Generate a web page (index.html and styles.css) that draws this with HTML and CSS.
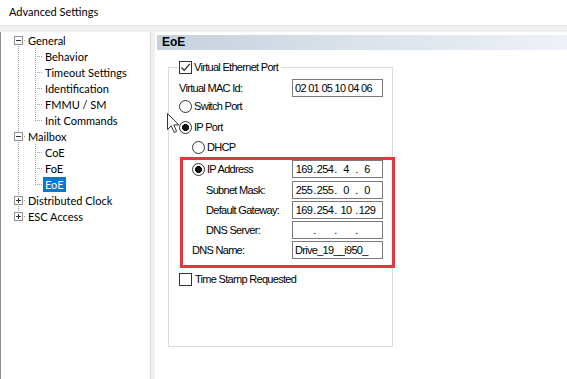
FILE: index.html
```html
<!DOCTYPE html>
<html>
<head>
<meta charset="utf-8">
<link rel="stylesheet" href="styles.css">
</head>
<body>
<div class="titlebar">Advanced Settings</div>
<div class="main">
  <div class="tree">
    <div class="row"><span class="ind exp first"><span class="box minus"></span></span><span class="lbl">General</span></div>
    <div class="row"><span class="ind pass"></span><span class="br"></span><span class="lbl">Behavior</span></div>
    <div class="row"><span class="ind pass"></span><span class="br"></span><span class="lbl">Timeout Settings</span></div>
    <div class="row"><span class="ind pass"></span><span class="br"></span><span class="lbl">Identification</span></div>
    <div class="row"><span class="ind pass"></span><span class="br"></span><span class="lbl">FMMU / SM</span></div>
    <div class="row"><span class="ind pass"></span><span class="br last"></span><span class="lbl">Init Commands</span></div>
    <div class="row"><span class="ind exp"><span class="box minus"></span></span><span class="lbl">Mailbox</span></div>
    <div class="row"><span class="ind pass"></span><span class="br"></span><span class="lbl">CoE</span></div>
    <div class="row"><span class="ind pass"></span><span class="br"></span><span class="lbl">FoE</span></div>
    <div class="row"><span class="ind pass"></span><span class="br last"></span><span class="lbl sel">EoE</span></div>
    <div class="row"><span class="ind exp"><span class="box plus"></span></span><span class="lbl">Distributed Clock</span></div>
    <div class="row"><span class="ind exp last"><span class="box plus"></span></span><span class="lbl">ESC Access</span></div>
  </div>
  <div class="panel">
    <div class="hdr">EoE</div>
    <div class="group">
      <div class="legend"><span class="chk checked"><svg width="11" height="11" viewBox="0 0 11 11"><path d="M1.5 5.5 L4.2 8.3 L9.8 1.8" fill="none" stroke="#222" stroke-width="1.2"/></svg></span><span class="txt">Virtual Ethernet Port</span></div>
      <div class="frow mac"><span class="flabel w1">Virtual MAC Id:</span><span class="input">02 01 05 10 04 06</span></div>
      <div class="opt r1"><span class="radio"></span><span class="txt">Switch Port</span></div>
      <div class="opt r2"><span class="radio on"></span><span class="txt">IP Port</span></div>
      <div class="opt r3 sub"><span class="radio"></span><span class="txt">DHCP</span></div>
      <div class="redbox">
        <div class="frow ip1"><span class="flabel w2 radlabel"><span class="radio on"></span><span class="txt">IP Address</span></span><span class="input ip"><span class="f">169</span><span class="d">.</span><span class="f">254</span><span class="d">.</span><span class="f">4</span><span class="d">.</span><span class="f">6</span></span></div>
        <div class="frow"><span class="flabel w2 ind2">Subnet Mask:</span><span class="input ip"><span class="f">255</span><span class="d">.</span><span class="f">255</span><span class="d">.</span><span class="f">0</span><span class="d">.</span><span class="f">0</span></span></div>
        <div class="frow"><span class="flabel w2 ind2">Default Gateway:</span><span class="input ip"><span class="f">169</span><span class="d">.</span><span class="f">254</span><span class="d">.</span><span class="f">10</span><span class="d">.</span><span class="f">129</span></span></div>
        <div class="frow"><span class="flabel w2 ind2">DNS Server:</span><span class="input ip"><span class="f"></span><span class="d">.</span><span class="f"></span><span class="d">.</span><span class="f"></span><span class="d">.</span><span class="f"></span></span></div>
        <div class="frow"><span class="flabel w2">DNS Name:</span><span class="input">Drive_19__i950_</span></div>
      </div>
      <div class="opt ts"><span class="chk"></span><span class="txt">Time Stamp Requested</span></div>
    </div>
    <svg class="cursor" width="14" height="21" viewBox="0 0 14 21"><path d="M0.5 0.5 L0.5 16.5 L4.3 12.9 L7.2 19.5 L9.6 18.4 L6.8 11.9 L11.8 11.9 Z" fill="#fff" stroke="#333" stroke-width="1" stroke-linejoin="round"/></svg>
  </div>
</div>
</body>
</html>
```
FILE: styles.css
```css
html, body {
  margin: 0;
  padding: 0;
}
body {
  width: 567px;
  height: 379px;
  overflow: hidden;
  background: #fff;
  font-family: Lato, "Noto Sans", sans-serif;
  color: #000;
}
.titlebar {
  height: 25px;
  box-sizing: border-box;
  padding: 0 0 2px 9px;
  display: flex;
  align-items: center;
  font-size: 11px;
  background: #fff;
}
.main {
  display: flex;
  background: #f0f0f0;
  border-top: 1px solid #e3e3e3;
  padding-top: 6px;
  height: 354px;
  box-sizing: border-box;
}
.tree {
  background: #fff;
  border-left: 1px solid #8e8e8e;
  border-right: 1px solid #d9d9d9;
  margin-right: 4px;
  padding-left: 9px;
  box-sizing: border-box;
  width: 151px;
  font-size: 11px;
}
.row {
  display: flex;
  height: 16px;
  align-items: center;
}
.ind {
  width: 16px;
  height: 16px;
  flex: none;
  display: flex;
  align-items: center;
  justify-content: flex-start;
}
.ind.pass {
  background: repeating-linear-gradient(to bottom, #a0a0a0 0 1px, transparent 1px 2px) 8px 0 / 1px 100% no-repeat;
}
.ind.exp {
  background:
    repeating-linear-gradient(to bottom, #a0a0a0 0 1px, transparent 1px 2px) 8px 0 / 1px 100% no-repeat,
    repeating-linear-gradient(to right, #a0a0a0 0 1px, transparent 1px 2px) 8px 8px / 8px 1px no-repeat;
}
.ind.exp.first {
  background:
    repeating-linear-gradient(to bottom, #a0a0a0 0 1px, transparent 1px 2px) 8px 100% / 1px 50% no-repeat,
    repeating-linear-gradient(to right, #a0a0a0 0 1px, transparent 1px 2px) 8px 8px / 8px 1px no-repeat;
}
.ind.exp.last {
  background:
    repeating-linear-gradient(to bottom, #a0a0a0 0 1px, transparent 1px 2px) 8px 0 / 1px 50% no-repeat,
    repeating-linear-gradient(to right, #a0a0a0 0 1px, transparent 1px 2px) 8px 8px / 8px 1px no-repeat;
}
.box {
  width: 9px;
  height: 9px;
  box-sizing: border-box;
  border: 1px solid #919191;
  margin-left: 4px;
  background: #fff;
}
.box.minus {
  background: linear-gradient(#333, #333) center / 5px 1px no-repeat, #fff;
}
.box.plus {
  background: linear-gradient(#333, #333) center / 5px 1px no-repeat, linear-gradient(#333, #333) center / 1px 5px no-repeat, #fff;
}
.br {
  width: 17px;
  height: 16px;
  flex: none;
  background:
    repeating-linear-gradient(to bottom, #a0a0a0 0 1px, transparent 1px 2px) 9px 0 / 1px 100% no-repeat,
    repeating-linear-gradient(to right, #a0a0a0 0 1px, transparent 1px 2px) 9px 8px / 8px 1px no-repeat;
}
.br.last {
  background:
    repeating-linear-gradient(to bottom, #a0a0a0 0 1px, transparent 1px 2px) 9px 0 / 1px 9px no-repeat,
    repeating-linear-gradient(to right, #a0a0a0 0 1px, transparent 1px 2px) 9px 8px / 8px 1px no-repeat;
}
.lbl {
  padding: 0 2px;
  height: 15px;
  line-height: 15px;
  white-space: nowrap;
}
.lbl.sel {
  background: #0078d7;
  color: #fff;
}
.panel {
  flex: 1;
  background: #fff;
  padding: 3px 0 0 2px;
  position: relative;
}
.hdr {
  height: 15px;
  line-height: 15px;
  padding-left: 5px;
  font-family: "Liberation Sans", Arial, sans-serif;
  font-weight: bold;
  font-size: 12px;
  background: linear-gradient(to right, #c5d1de, #dde4ec 55%, #eef1f7);
}
.group {
  margin: 17px 0 0 11px;
  width: 225px;
  height: 280px;
  box-sizing: border-box;
  border: 1px solid #dcdcdc;
  padding-left: 10px;
  font-family: "Liberation Sans", Arial, sans-serif;
  font-size: 11px;
  letter-spacing: -0.7px;
  display: flex;
  flex-direction: column;
  align-items: flex-start;
}
.legend {
  margin-top: -8px;
  height: 14px;
  display: flex;
  align-items: center;
  background: #fff;
  padding-right: 3px;
}
.chk {
  width: 13px;
  height: 13px;
  box-sizing: border-box;
  border: 1px solid #333;
  background: #fff;
  flex: none;
  display: flex;
  align-items: center;
  justify-content: center;
}
.txt {
  margin-left: 2px;
  white-space: nowrap;
}
.opt {
  display: flex;
  align-items: center;
  height: 16px;
}
.radio {
  width: 13px;
  height: 13px;
  box-sizing: border-box;
  border: 1px solid #333;
  border-radius: 50%;
  background: #fff;
  flex: none;
}
.radio.on {
  background: radial-gradient(circle, #111 0 3.2px, #fff 3.8px);
}
.frow {
  display: flex;
  align-items: center;
  height: 20px;
}
.mac {
  margin-top: 4px;
}
.r1 { margin-top: 0; }
.r2 { margin-top: 5px; }
.r3 { margin-top: 4px; }
.sub { margin-left: 13px; }
.flabel {
  flex: none;
  white-space: nowrap;
}
.w1 { width: 113px; }
.w2 { width: 100px; }
.ind2 { padding-left: 14px; box-sizing: border-box; }
.radlabel { display: flex; align-items: center; }
.input {
  width: 91px;
  height: 18px;
  box-sizing: border-box;
  border: 1px solid #7a7a7a;
  background: #fff;
  padding-left: 2px;
  display: flex;
  align-items: center;
  white-space: nowrap;
  flex: none;
}
.ip .f {
  width: 18px;
  text-align: center;
  flex: none;
}
.ip .d {
  width: 3px;
  text-align: center;
  flex: none;
}
.redbox {
  margin-top: 2px;
  margin-left: 1px;
  width: 215px;
  box-sizing: border-box;
  border: 3px solid #e8343f;
  padding: 0 0 5px 9px;
  flex: none;
}
.redbox .frow {
  height: 20px;
}
.redbox .ip1 {
  height: 18px;
  margin-bottom: 2px;
}
.ts {
  margin-top: 4px;
  height: 14px;
}
.ts .txt { margin-left: 3px; }
.cursor {
  position: absolute;
  left: 12px;
  top: 81px;
}
```
